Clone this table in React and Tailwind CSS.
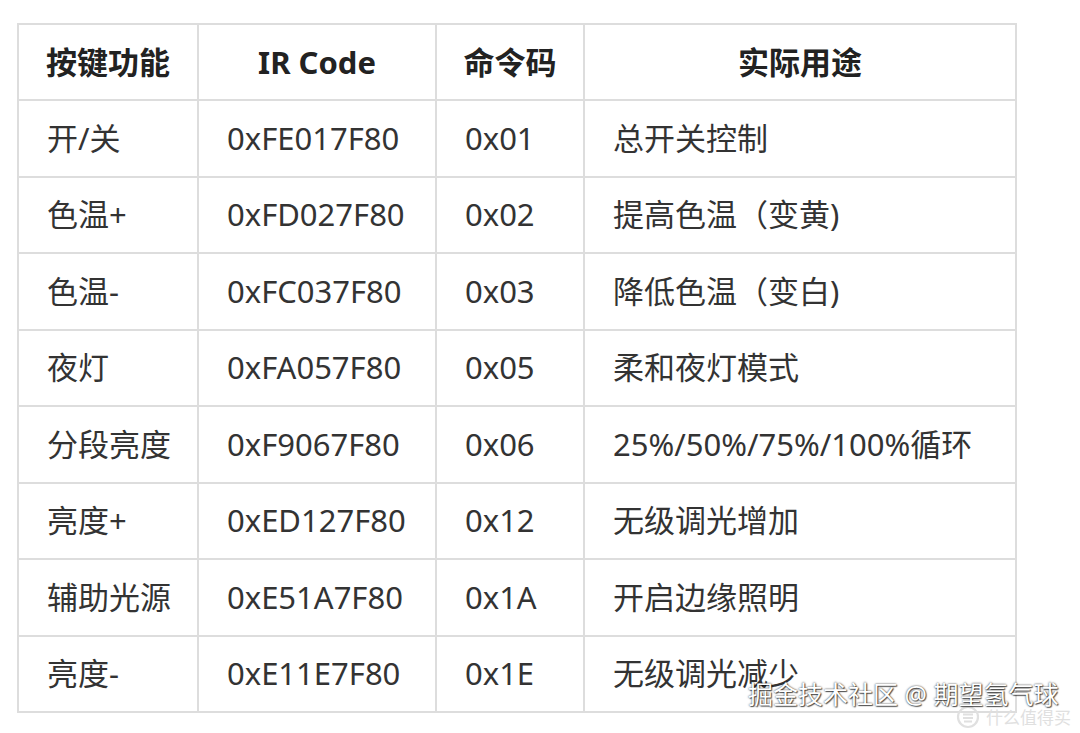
import React from "react";

const rows = [
  ["开/关", "0xFE017F80", "0x01", "总开关控制"],
  ["色温+", "0xFD027F80", "0x02", "提高色温（变黄)"],
  ["色温-", "0xFC037F80", "0x03", "降低色温（变白)"],
  ["夜灯", "0xFA057F80", "0x05", "柔和夜灯模式"],
  ["分段亮度", "0xF9067F80", "0x06", "25%/50%/75%/100%循环"],
  ["亮度+", "0xED127F80", "0x12", "无级调光增加"],
  ["辅助光源", "0xE51A7F80", "0x1A", "开启边缘照明"],
  ["亮度-", "0xE11E7F80", "0x1E", "无级调光减少"],
];

const font = { fontFamily: '"Noto Sans", "Noto Sans CJK SC", sans-serif' };

export default function App() {
  return (
    <div className="relative w-[1080px] h-[733px] bg-white overflow-hidden" style={font}>
      <div className="pt-[23px] pl-[17px]">
        <table className="border-collapse table-fixed w-[998px] text-[31px] text-[#333]">
          <colgroup>
            <col className="w-[180px]" />
            <col className="w-[238px]" />
            <col className="w-[148px]" />
            <col className="w-[432px]" />
          </colgroup>
          <thead>
            <tr className="h-[76px]">
              {["按键功能", "IR Code", "命令码", "实际用途"].map((h) => (
                <th key={h} className="border-2 border-[#dddddd] text-center font-bold text-[#222] px-0 py-0 leading-none">
                  {h}
                </th>
              ))}
            </tr>
          </thead>
          <tbody>
            {rows.map((r, i) => (
              <tr key={i} className="h-[76.5px]">
                {r.map((c, j) => (
                  <td key={j} className="border-2 border-[#dddddd] text-left pl-[28px] pr-0 py-0 whitespace-nowrap leading-none">
                    {c}
                  </td>
                ))}
              </tr>
            ))}
          </tbody>
        </table>
      </div>

      <div className="absolute left-[956px] top-[705px] flex items-center gap-[6px] text-[#e0e0e0] text-[17px] leading-none">
        <svg width="24" height="24" viewBox="0 0 24 24" className="shrink-0">
          <circle cx="12" cy="12" r="10" fill="none" stroke="#e0e0e0" strokeWidth="2.2" />
          <path d="M7 9.5h10M7 13h10M8 16.5h8" stroke="#e0e0e0" strokeWidth="1.8" />
        </svg>
        <span>什么值得买</span>
      </div>

      <div className="absolute left-[748px] top-[682px] text-white text-[25px] leading-none whitespace-nowrap [text-shadow:0_0_2px_rgba(0,0,0,0.85),1px_1px_1px_rgba(0,0,0,0.6)]">
        掘金技术社区 @ 期望氢气球
      </div>
    </div>
  );
}
